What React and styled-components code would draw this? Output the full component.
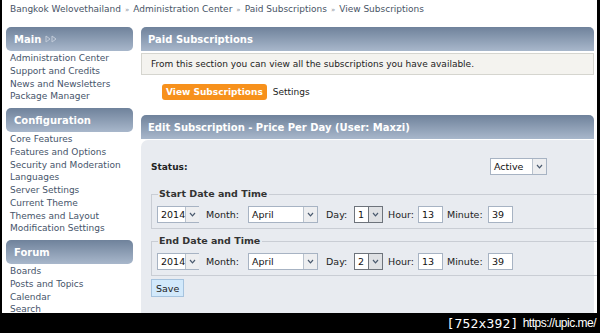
import React from 'react';
import styled, { createGlobalStyle } from 'styled-components';

const GlobalStyle = createGlobalStyle`
  html, body {
    margin: 0;
    padding: 0;
    background: #000;
  }
  body {
    font-family: "DejaVu Sans", Verdana, sans-serif;
    font-size: 9px;
  }
`;

const Frame = styled.div`
  width: 600px;
  height: 333px;
  background: #000;
  overflow: hidden;
`;

const Screen = styled.div`
  margin-left: 2px;
  width: 595px;
  height: 313px;
  background: #fff;
  overflow: hidden;
`;

const Watermark = styled.div`
  display: flex;
  justify-content: flex-end;
  align-items: center;
  height: 20px;
  padding-right: 4px;
  color: #fff;
  gap: 4px;
`;

const MarkSize = styled.span`
  font-family: "DejaVu Sans Mono", monospace;
  font-size: 13px;
  letter-spacing: 0.2px;
`;

const MarkUrl = styled.span`
  font-family: "Liberation Sans", Arial, sans-serif;
  font-size: 12px;
  letter-spacing: -0.5px;
`;

const Crumbs = styled.div`
  height: 27px;
  padding: 4px 0 0 8px;
  box-sizing: border-box;
  color: #485466;
  font-size: 9px;
  white-space: nowrap;
`;

const Sep = styled.span`
  color: #8a93a0;
  font-size: 7px;
  margin: 0 4px;
`;

const Layout = styled.div`
  display: flex;
  align-items: flex-start;
  padding-left: 4px;
  gap: 8px;
`;

const Sidebar = styled.div`
  width: 127px;
  flex: none;
  display: flex;
  flex-direction: column;
`;

const SideHead = styled.div`
  height: 24px;
  border-radius: 5px;
  background: linear-gradient(#6f829b, #a8b7cb);
  color: #fff;
  font-weight: bold;
  font-size: 10px;
  display: flex;
  align-items: center;
  gap: 4px;
  padding-left: 8px;
  margin-top: ${p => (p.first ? '0' : '5px')};
`;

const SideList = styled.ul`
  list-style: none;
  margin: 0;
  padding: 1px 0 0 4px;
`;

const SideLink = styled.li`
  color: #46546a;
  font-size: 9px;
  line-height: 12.75px;
  white-space: nowrap;
`;

const Main = styled.div`
  width: 453px;
  flex: none;
  display: flex;
  flex-direction: column;
`;

const CatHead = styled.div`
  height: 24px;
  border-radius: 5px 5px 0 0;
  background: linear-gradient(#6f829b, #a8b7cb);
  color: #fff;
  font-weight: bold;
  font-size: 10px;
  display: flex;
  align-items: center;
  padding-left: 7px;
  margin-top: ${p => p.gap || 0}px;
`;

const Desc = styled.div`
  margin-top: 2px;
  height: 22px;
  border: 1px solid #d5d5cf;
  background: #f4f3ef;
  box-sizing: border-box;
  display: flex;
  align-items: center;
  padding-left: 9px;
  color: #222;
  font-size: 9px;
`;

const Tabs = styled.div`
  display: flex;
  align-items: center;
  gap: 6px;
  margin-top: 9px;
  padding-left: 21px;
`;

const Tab = styled.span`
  display: inline-flex;
  align-items: center;
  height: 16px;
  border-radius: 3px;
  font-size: 9px;
  ${p =>
    p.active
      ? 'padding: 0 4px; background: #f7911c; color: #fff; font-weight: bold;'
      : 'padding: 0; color: #222;'}
`;

const Body = styled.div`
  background: #e8ebf0;
  border-radius: 7px 0 0 0;
  height: 200px;
  margin-top: 1px;
  padding: 18px 0 0 10px;
  box-sizing: border-box;
`;

const StatusRow = styled.div`
  display: flex;
  align-items: center;
  justify-content: space-between;
  padding-right: 47px;
  height: 17px;
`;

const StatusLabel = styled.span`
  font-weight: bold;
  color: #222;
  font-size: 9px;
`;

const Fieldset = styled.fieldset`
  margin: ${p => p.top}px -10px 0 0;
  padding: 6px 0 5px 5px;
  border: 1px solid #c9cdd4;
  border-right: none;
`;

const Legend = styled.legend`
  font-weight: bold;
  color: #333;
  font-size: 9.5px;
  line-height: 12px;
  padding: 0 2px 0 1px;
  margin-left: 1px;
`;

const Row = styled.div`
  display: flex;
  align-items: center;
  color: #222;
  font-size: 9.5px;
`;

const Label = styled.span`
  margin-left: ${p => p.left}px;
  width: ${p => p.w}px;
  flex: none;
  white-space: nowrap;
`;

const SelectBox = styled.div`
  display: flex;
  flex: none;
  width: ${p => p.w}px;
  height: 17px;
  box-sizing: border-box;
  border: 1px solid ${p => (p.dark ? '#6d737b' : '#a7b3c3')};
  background: #fff;
  font-size: 9.5px;
  color: #111;
`;

const SelectText = styled.span`
  flex: 1;
  padding-left: 3px;
  line-height: 15px;
`;

const SelectArrow = styled.span`
  width: 13px;
  flex: none;
  border-left: 1px solid ${p => (p.dark ? '#6d737b' : '#b9c2cd')};
  background: ${p => (p.dark ? '#dfe1e4' : '#edeef0')};
  display: flex;
  align-items: center;
  justify-content: center;
`;

const TextBox = styled.span`
  width: 25px;
  flex: none;
  height: 17px;
  box-sizing: border-box;
  border: 1px solid #a7b3c3;
  background: #fff;
  padding-left: 3px;
  line-height: 15px;
  font-size: 9.5px;
  color: #111;
`;

const SaveButton = styled.button`
  display: block;
  margin-top: 3px;
  height: 18px;
  padding: 0 4px;
  border: 1px solid #a6c3de;
  background: #d2e9fb;
  font-family: "DejaVu Sans", Verdana, sans-serif;
  font-size: 9.5px;
  color: #222;
`;

const Chevron = () => (
  <svg width="7" height="5" viewBox="0 0 7 5">
    <path d="M1 1 L3.5 3.8 L6 1" fill="none" stroke="#4a5a6e" strokeWidth="1.2" />
  </svg>
);

const Arrows = () => (
  <svg width="13" height="8" viewBox="0 0 13 8">
    <path d="M1 1 L5 4 L1 7 Z M7 1 L11 4 L7 7 Z" fill="none" stroke="#c3ccd9" strokeWidth="1" />
  </svg>
);

const FakeSelect = ({ w, value, dark }) => (
  <SelectBox w={w} dark={dark}>
    <SelectText>{value}</SelectText>
    <SelectArrow dark={dark}>
      <Chevron />
    </SelectArrow>
  </SelectBox>
);

const DateRow = ({ day }) => (
  <Row>
    <FakeSelect w={42} value="2014" />
    <Label left={7} w={42}>Month:</Label>
    <FakeSelect w={70} value="April" />
    <Label left={8} w={28}>Day:</Label>
    <FakeSelect w={29} value={day} dark />
    <Label left={5} w={30}>Hour:</Label>
    <TextBox>13</TextBox>
    <Label left={4} w={41}>Minute:</Label>
    <TextBox>39</TextBox>
  </Row>
);

const menus = [
  {
    title: 'Main',
    links: ['Administration Center', 'Support and Credits', 'News and Newsletters', 'Package Manager'],
  },
  {
    title: 'Configuration',
    links: [
      'Core Features',
      'Features and Options',
      'Security and Moderation',
      'Languages',
      'Server Settings',
      'Current Theme',
      'Themes and Layout',
      'Modification Settings',
    ],
  },
  {
    title: 'Forum',
    links: ['Boards', 'Posts and Topics', 'Calendar', 'Search'],
  },
];

export default function App() {
  return (
    <Frame>
      <GlobalStyle />
      <Screen>
        <Crumbs>
          Bangkok Welovethailand<Sep>»</Sep>Administration Center<Sep>»</Sep>Paid Subscriptions
          <Sep>»</Sep>View Subscriptions
        </Crumbs>
        <Layout>
          <Sidebar>
            {menus.map((m, i) => (
              <div key={m.title}>
                <SideHead first={i === 0}>
                  {m.title}
                  {i === 0 && <Arrows />}
                </SideHead>
                <SideList>
                  {m.links.map(l => (
                    <SideLink key={l}>{l}</SideLink>
                  ))}
                </SideList>
              </div>
            ))}
          </Sidebar>
          <Main>
            <CatHead>Paid Subscriptions</CatHead>
            <Desc>From this section you can view all the subscriptions you have available.</Desc>
            <Tabs>
              <Tab active>View Subscriptions</Tab>
              <Tab>Settings</Tab>
            </Tabs>
            <CatHead gap={15}>Edit Subscription - Price Per Day (User: Maxzi)</CatHead>
            <Body>
              <StatusRow>
                <StatusLabel>Status:</StatusLabel>
                <FakeSelect w={57} value="Active" />
              </StatusRow>
              <Fieldset top={13}>
                <Legend>Start Date and Time</Legend>
                <DateRow day="1" />
              </Fieldset>
              <Fieldset top={6}>
                <Legend>End Date and Time</Legend>
                <DateRow day="2" />
              </Fieldset>
              <SaveButton>Save</SaveButton>
            </Body>
          </Main>
        </Layout>
      </Screen>
      <Watermark>
        <MarkSize>[752x392]</MarkSize>
        <MarkUrl>https://upic.me/</MarkUrl>
      </Watermark>
    </Frame>
  );
}
